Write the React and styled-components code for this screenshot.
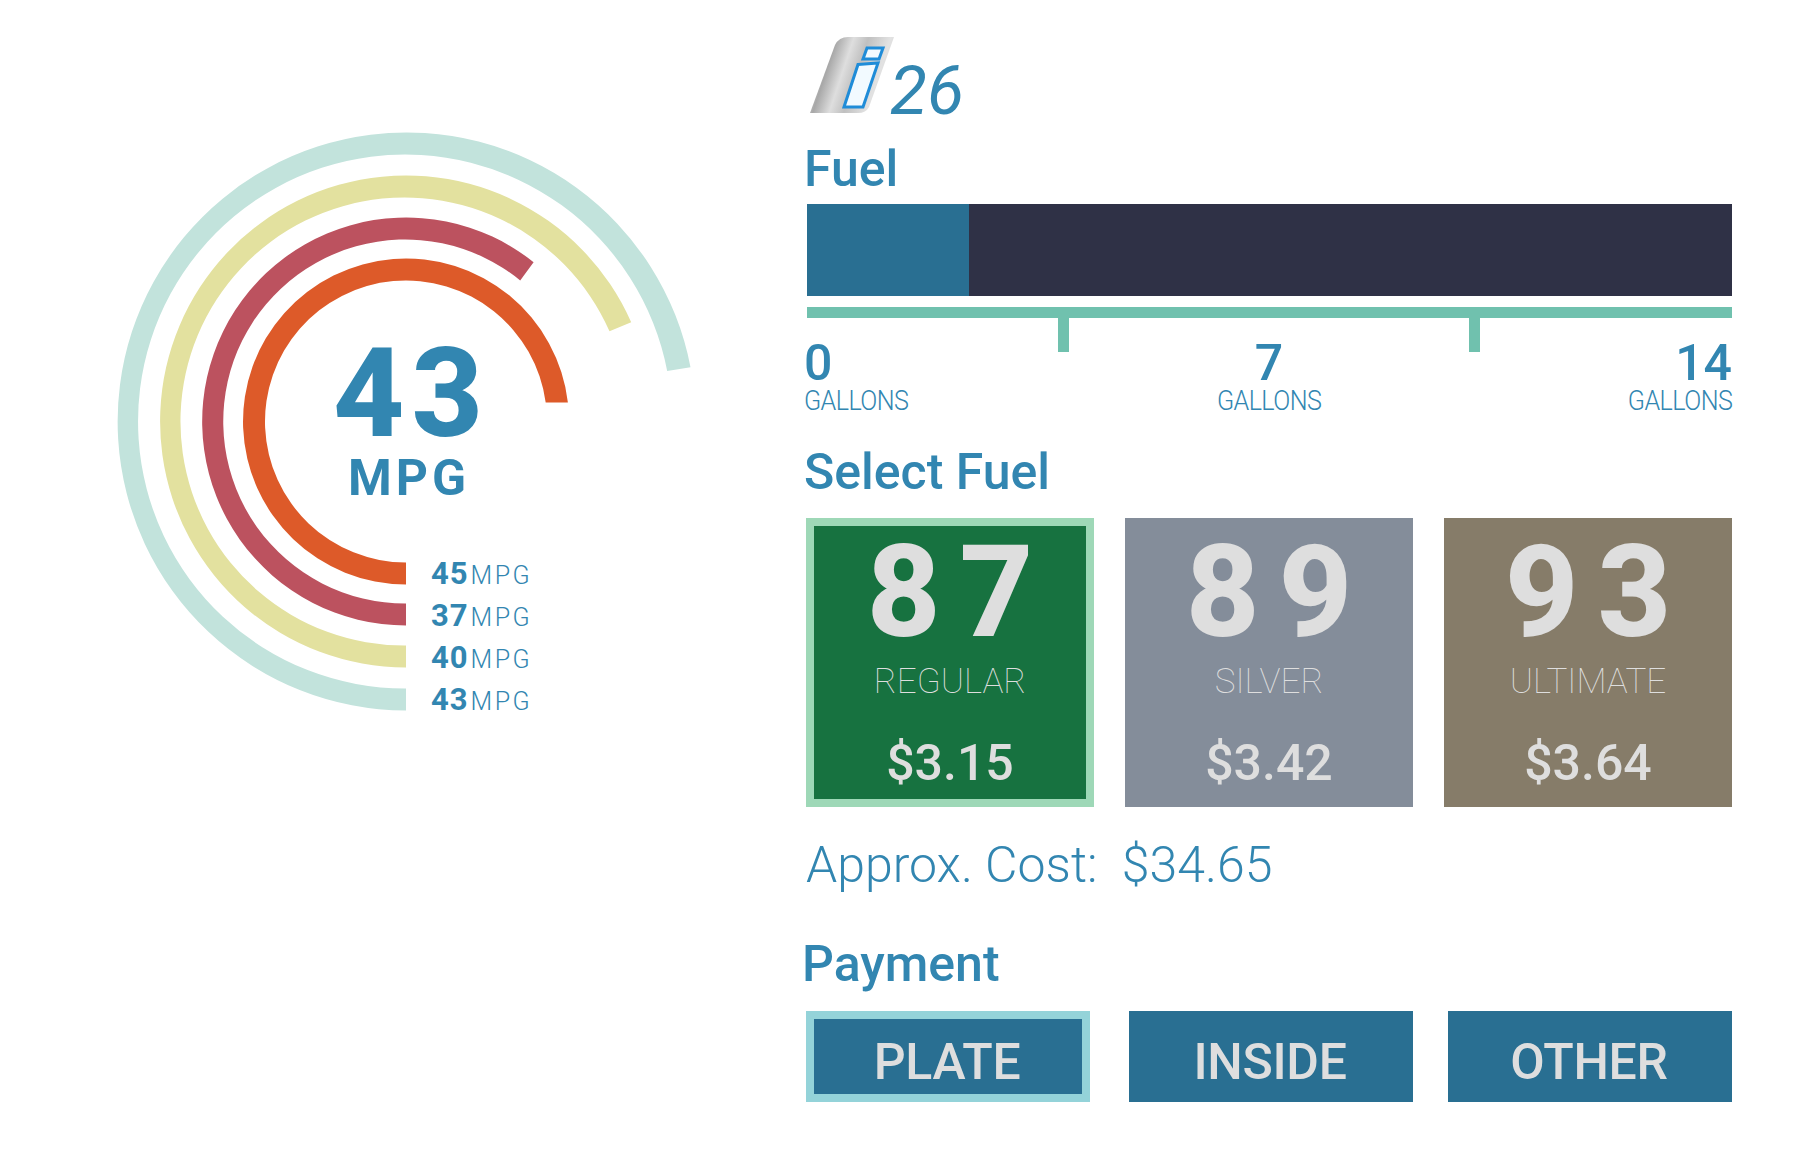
import React from "react";
import styled, { createGlobalStyle } from "styled-components";

const BLUE = "#3286b1";
const LIGHT = "#dedede";

const GlobalStyle = createGlobalStyle`
  html, body {
    margin: 0;
    padding: 0;
    background: #ffffff;
  }
  body {
    font-family: Roboto, "Liberation Sans", sans-serif;
    color: ${BLUE};
  }
`;

const PageUI = styled.div`
  width: 1800px;
  height: 1152px;
  box-sizing: border-box;
  padding: 37px 68px 0 100px;
  display: flex;
  gap: 86px;
  overflow: hidden;
`;

const GaugeUI = styled.div`
  position: relative;
  flex: none;
  width: 620px;
  height: 620px;
  margin-top: 83px;
`;

const GaugeCenterUI = styled.div`
  position: absolute;
  left: 209px;
  width: 200px;
  top: 212px;
  display: flex;
  flex-direction: column;
  align-items: center;
`;

const GaugeValueUI = styled.div`
  font-size: 124px;
  line-height: 124px;
  font-weight: 800;
  letter-spacing: 7px;
  margin-right: -5px;
`;

const GaugeUnitUI = styled.div`
  font-size: 50px;
  line-height: 50px;
  font-weight: 700;
  letter-spacing: 4px;
  margin-top: -3px;
`;

const LegendUI = styled.div`
  position: absolute;
  left: 331px;
  top: 433px;
  display: flex;
  flex-direction: column;
`;

const LegendRowUI = styled.div`
  display: flex;
  align-items: baseline;
  height: 42px;
  line-height: 42px;
`;

const LegendValueUI = styled.span`
  font-size: 31px;
  font-weight: 700;
  letter-spacing: 1px;
`;

const LegendUnitUI = styled.span`
  font-size: 25px;
  font-weight: 300;
  letter-spacing: 2.5px;
  margin-left: 2px;
`;

const RightUI = styled.div`
  flex: none;
  width: 926px;
  display: flex;
  flex-direction: column;
`;

const PumpRowUI = styled.div`
  display: flex;
  align-items: flex-end;
  height: 78px;
  margin-left: 2px;
`;

const PumpNumberUI = styled.div`
  font-size: 68px;
  line-height: 68px;
  font-style: italic;
  font-weight: 400;
  margin-left: -8px;
  margin-bottom: -10px;
`;

const TitleUI = styled.div`
  font-size: 50px;
  line-height: 50px;
  font-weight: 500;
  margin-top: ${(p) => p.$top}px;
  margin-left: ${(p) => p.$left || -2}px;
`;

const FuelBarUI = styled.div`
  height: 92px;
  background: #2f3146;
  margin: 10px 0 0 1px;
  display: flex;
`;

const FuelLevelUI = styled.div`
  width: 162px;
  background: #296f92;
`;

const RulerUI = styled.div`
  position: relative;
  height: 11px;
  margin: 11px 0 0 1px;
  background: #70c1ae;
`;

const TickUI = styled.div`
  position: absolute;
  top: 11px;
  left: ${(p) => p.$left}px;
  width: 11px;
  height: 34px;
  background: #70c1ae;
`;

const ScaleUI = styled.div`
  display: grid;
  grid-template-columns: 1fr 1fr 1fr;
  margin-top: 20px;
`;

const ScaleItemUI = styled.div`
  display: flex;
  flex-direction: column;
  align-items: ${(p) => p.$align};
  margin-left: ${(p) => (p.$align === "flex-start" ? "-2px" : 0)};
`;

const ScaleValueUI = styled.div`
  font-size: 50px;
  line-height: 50px;
  font-weight: 500;
`;

const ScaleUnitUI = styled.div`
  font-size: 27px;
  line-height: 27px;
  font-weight: 300;
  letter-spacing: -0.6px;
  transform: scaleX(0.93);
  transform-origin: ${(p) => p.$origin} center;
`;

const CardsUI = styled.div`
  display: grid;
  grid-template-columns: repeat(3, 288px);
  column-gap: 31px;
  margin-top: 21px;
`;

const CardUI = styled.div`
  height: 289px;
  box-sizing: border-box;
  background: ${(p) => p.$bg};
  border: 8px solid ${(p) => (p.$selected ? "#9ed8b7" : p.$bg)};
  display: flex;
  flex-direction: column;
  align-items: center;
  color: ${LIGHT};
`;

const OctaneUI = styled.div`
  font-size: 128px;
  line-height: 128px;
  font-weight: 800;
  letter-spacing: 19px;
  margin-right: -19px;
  margin-top: 2px;
`;

const GradeUI = styled.div`
  font-size: 35px;
  line-height: 36px;
  font-weight: 100;
  margin-top: 8px;
`;

const PriceUI = styled.div`
  font-size: 50px;
  line-height: 50px;
  font-weight: 500;
  margin-top: 38px;
`;

const CostUI = styled.div`
  font-size: 50px;
  line-height: 50px;
  font-weight: 300;
  margin-top: 33px;
`;

const PaymentsUI = styled.div`
  display: grid;
  grid-template-columns: 323px 319px 284px;
  margin-top: 22px;
`;

const PayButtonUI = styled.div`
  width: 284px;
  height: 91px;
  box-sizing: border-box;
  padding: 11px 2px 0 0;
  background: #296f92;
  border: 8px solid ${(p) => (p.$selected ? "#94d3d9" : "#296f92")};
  display: flex;
  align-items: center;
  justify-content: center;
  font-size: 50px;
  line-height: 50px;
  font-weight: 500;
  letter-spacing: -0.3px;
  color: ${LIGHT};
`;

// center of the rings, in gauge coordinates
const CX = 306;
const CY = 301.5;

// end points measured off the picture, relative to the center
const RINGS = [
  { color: "#c2e3dc", outer: 289, inner: 267, endOuter: [284.5, -54.2], endInner: [261.2, -50.6] },
  { color: "#e3e19f", outer: 246, inner: 224, endOuter: [225.2, -99.2], endInner: [203.5, -90.2] },
  { color: "#bc525f", outer: 204, inner: 182, endOuter: [127.6, -159.3], endInner: [114.2, -141.1] },
  { color: "#dd5a29", outer: 163, inner: 141, endOuter: [161.9, -19], endInner: [139.7, -19] },
];

const ringPath = ({ outer, inner, endOuter, endInner }) =>
  `M${CX} ${CY + outer} A${outer} ${outer} 0 1 1 ${CX + endOuter[0]} ${CY + endOuter[1]} ` +
  `L${CX + endInner[0]} ${CY + endInner[1]} A${inner} ${inner} 0 1 0 ${CX} ${CY + inner} Z`;

const Rings = () => (
  <svg width="620" height="620" viewBox="0 0 620 620">
    {RINGS.map((ring) => (
      <path key={ring.color} d={ringPath(ring)} fill={ring.color} />
    ))}
  </svg>
);

const PumpLogo = () => (
  <svg width="90" height="78" viewBox="0 0 90 78">
    <defs>
      <linearGradient id="metal" x1="0" y1="0.3" x2="1" y2="0.6">
        <stop offset="0" stopColor="#f0f0f0" />
        <stop offset="0.22" stopColor="#a8a8a8" />
        <stop offset="0.4" stopColor="#dedede" />
        <stop offset="0.56" stopColor="#c0c0c0" />
        <stop offset="0.8" stopColor="#e2e2e2" />
        <stop offset="1" stopColor="#d4d4d4" />
      </linearGradient>
    </defs>
    <path
      d="M86 0 L40 0 Q31 0 27 8 L2 76 L50 76 Q58 76 61 70 Z"
      fill="url(#metal)"
    />
    <path
      d="M59 11 L75 11 L71 22 L55 22 Z"
      fill="#f2faff"
      stroke="#1f8cd8"
      strokeWidth="3"
    />
    <path
      d="M50 27.500 L70 26 L55 70 L36 70 Z"
      fill="#f2faff"
      stroke="#1f8cd8"
      strokeWidth="3"
    />
  </svg>
);

const FUELS = [
  { octane: "87", grade: "REGULAR", price: "$3.15", bg: "#177240", selected: true },
  { octane: "89", grade: "SILVER", price: "$3.42", bg: "#848d9a" },
  { octane: "93", grade: "ULTIMATE", price: "$3.64", bg: "#867c69" },
];

const App = () => {
  return (
    <PageUI>
      <GlobalStyle />
      <GaugeUI>
        <Rings />
        <GaugeCenterUI>
          <GaugeValueUI>43</GaugeValueUI>
          <GaugeUnitUI>MPG</GaugeUnitUI>
        </GaugeCenterUI>
        <LegendUI>
          {["45", "37", "40", "43"].map((v, i) => (
            <LegendRowUI key={i}>
              <LegendValueUI>{v}</LegendValueUI>
              <LegendUnitUI>MPG</LegendUnitUI>
            </LegendRowUI>
          ))}
        </LegendUI>
      </GaugeUI>
      <RightUI>
        <PumpRowUI>
          <PumpLogo />
          <PumpNumberUI>26</PumpNumberUI>
        </PumpRowUI>
        <TitleUI $top={29}>Fuel</TitleUI>
        <FuelBarUI>
          <FuelLevelUI />
        </FuelBarUI>
        <RulerUI>
          <TickUI $left={251} />
          <TickUI $left={662} />
        </RulerUI>
        <ScaleUI>
          <ScaleItemUI $align="flex-start">
            <ScaleValueUI>0</ScaleValueUI>
            <ScaleUnitUI $origin="left">GALLONS</ScaleUnitUI>
          </ScaleItemUI>
          <ScaleItemUI $align="center">
            <ScaleValueUI>7</ScaleValueUI>
            <ScaleUnitUI $origin="center">GALLONS</ScaleUnitUI>
          </ScaleItemUI>
          <ScaleItemUI $align="flex-end">
            <ScaleValueUI>14</ScaleValueUI>
            <ScaleUnitUI $origin="right">GALLONS</ScaleUnitUI>
          </ScaleItemUI>
        </ScaleUI>
        <TitleUI $top={32}>Select Fuel</TitleUI>
        <CardsUI>
          {FUELS.map((f) => (
            <CardUI key={f.octane} $bg={f.bg} $selected={f.selected}>
              <OctaneUI>{f.octane}</OctaneUI>
              <GradeUI>{f.grade}</GradeUI>
              <PriceUI>{f.price}</PriceUI>
            </CardUI>
          ))}
        </CardsUI>
        <CostUI>Approx. Cost:&nbsp; $34.65</CostUI>
        <TitleUI $top={49} $left={-4}>Payment</TitleUI>
        <PaymentsUI>
          <PayButtonUI $selected>PLATE</PayButtonUI>
          <PayButtonUI>INSIDE</PayButtonUI>
          <PayButtonUI>OTHER</PayButtonUI>
        </PaymentsUI>
      </RightUI>
    </PageUI>
  );
};

export default App;
